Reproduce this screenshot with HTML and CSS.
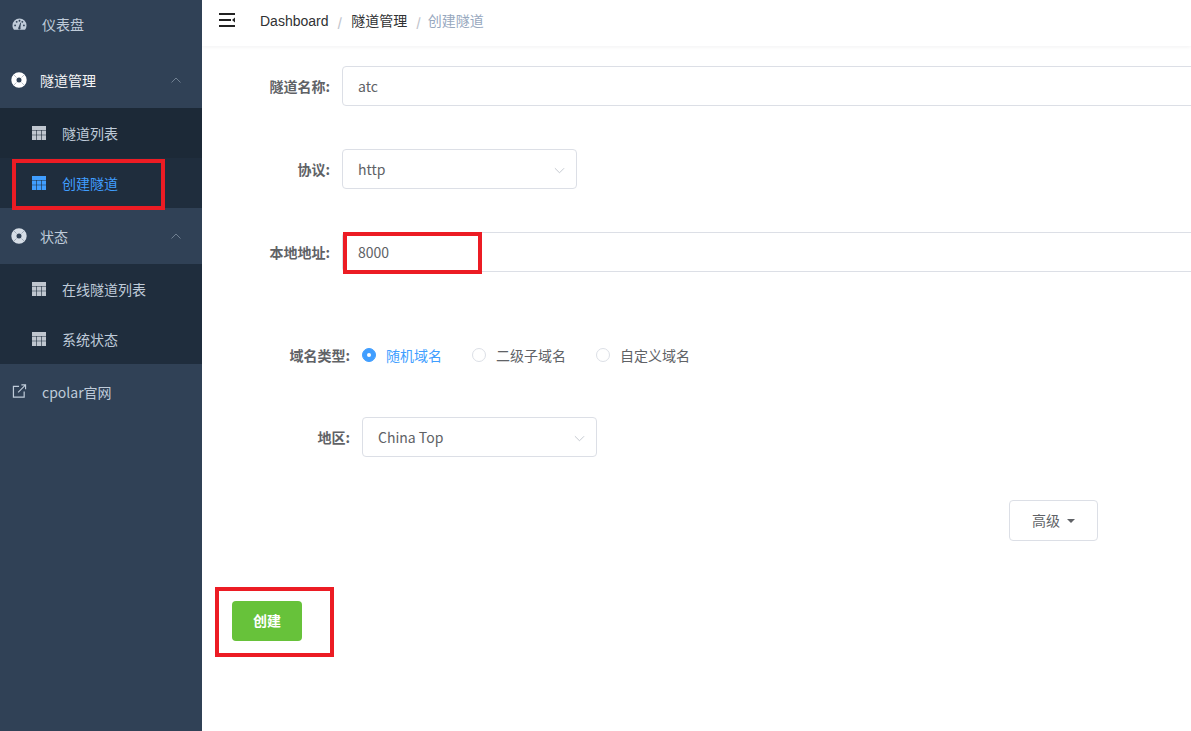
FILE: index.html
```html
<!DOCTYPE html>
<html lang="zh-CN">
<head>
<meta charset="utf-8">
<title>创建隧道</title>
<link rel="stylesheet" href="styles.css">
</head>
<body>
<div class="app">
  <aside class="sidebar">
    <nav class="menu">
      <a class="item"><svg class="ico" viewBox="0 0 16 14"><path d="M8 1a7.500 7.500 0 0 0-7.500 7.500c0 1.700.6 3.300 1.600 4.500h11.800a7.400 7.400 0 0 0 1.600-4.500A7.500 7.500 0 0 0 8 1z" fill="#bfcbd9"/><g fill="#304156"><circle cx="3.300" cy="8.500" r="1"/><circle cx="5" cy="4.700" r="1"/><circle cx="11" cy="4.700" r="1"/><circle cx="12.700" cy="8.500" r="1"/><circle cx="8" cy="3.500" r="1"/><path d="M7 10.500 9 5.500l.6.200L9 10.800a1.300 1.300 0 1 1-2-.3z"/></g></svg><span class="dash-label">仪表盘</span></a>
      <a class="item open"><svg class="ring" viewBox="0 0 16 16"><circle cx="8" cy="8" r="5.100" fill="none" stroke="#fff" stroke-width="5.200"/><path d="M2.500 2.500l3 3M13.500 2.500l-3 3M2.500 13.500l3-3M13.500 13.500l-3-3" stroke="#8c97a5" stroke-width=".6"/></svg><span class="group-label">隧道管理</span><svg class="chev" viewBox="0 0 10 6"><path d="M.5 5.500 5 1l4.500 4.500" fill="none" stroke="#6f7f91" stroke-width="1"/></svg></a>
      <div class="sub">
        <a class="sub-item first"><svg class="grid" viewBox="0 0 14 14"><use href="#tb"/></svg><span>隧道列表</span></a>
        <a class="sub-item active"><svg class="grid" viewBox="0 0 14 14"><use href="#tb"/></svg><span>创建隧道</span></a>
      </div>
      <a class="item"><svg class="ring" viewBox="0 0 16 16"><circle cx="8" cy="8" r="5.100" fill="none" stroke="#d5dde6" stroke-width="5.200"/><path d="M2.500 2.500l3 3M13.500 2.500l-3 3M2.500 13.500l3-3M13.500 13.500l-3-3" stroke="#7d8a99" stroke-width=".6"/></svg><span class="group-label">状态</span><svg class="chev" viewBox="0 0 10 6"><path d="M.5 5.500 5 1l4.500 4.500" fill="none" stroke="#6f7f91" stroke-width="1"/></svg></a>
      <div class="sub">
        <a class="sub-item"><svg class="grid" viewBox="0 0 14 14"><use href="#tb"/></svg><span>在线隧道列表</span></a>
        <a class="sub-item"><svg class="grid" viewBox="0 0 14 14"><use href="#tb"/></svg><span>系统状态</span></a>
      </div>
      <a class="item"><svg class="ico ext" viewBox="0 0 15 15"><path d="M7 2.500H1v11.500h11.500V8" fill="none" stroke="#bfcbd9" stroke-width="1.300"/><path d="M6 9l7.500-7.500M9.500 1h4.500v4.500" fill="none" stroke="#bfcbd9" stroke-width="1.200"/></svg><span class="dash-label">cpolar官网</span></a>
    </nav>
  </aside>
  <main class="main">
    <header class="navbar">
      <svg class="hamburger" viewBox="0 0 16 14"><path d="M0 0h16v2H0zM0 12h16v2H0zM0 6h12v2H0z" fill="#222"/><path d="M16 4.500v5L13 7z" fill="#222"/></svg>
      <ol class="crumbs">
        <li class="home">Dashboard</li><li class="sep">/</li><li class="link">隧道管理</li><li class="sep">/</li><li class="current">创建隧道</li>
      </ol>
    </header>
    <form class="form">
      <div class="row row-name">
        <label class="label">隧道名称:</label>
        <div class="input wide">atc</div>
      </div>
      <div class="row row-proto">
        <label class="label">协议:</label>
        <div class="input select">http<svg class="caret" viewBox="0 0 12 7"><path d="M1 1l5 5 5-5" fill="none" stroke="#c0c4cc" stroke-width="1"/></svg></div>
      </div>
      <div class="row row-addr">
        <label class="label">本地地址:</label>
        <div class="input wide">8000</div>
      </div>
      <div class="row row-radio">
        <label class="label inner">域名类型:</label>
        <div class="radios">
          <span class="radio checked"><i></i>随机域名</span>
          <span class="radio"><i></i>二级子域名</span>
          <span class="radio"><i></i>自定义域名</span>
        </div>
      </div>
      <div class="row row-region">
        <label class="label inner">地区:</label>
        <div class="input select">China Top<svg class="caret" viewBox="0 0 12 7"><path d="M1 1l5 5 5-5" fill="none" stroke="#c0c4cc" stroke-width="1"/></svg></div>
      </div>
      <div class="row-adv">
        <button type="button" class="btn-adv">高级<span class="tri"></span></button>
      </div>
      <button type="button" class="btn-create">创建</button>
    </form>
  </main>
</div>
<div class="mark mark-side"></div>
<div class="mark mark-addr"></div>
<div class="mark mark-create"></div>
<svg class="defs" width="0" height="0"><defs><g id="tb" fill="currentColor"><path d="M0 0h14v4H0zM0 4.600h4.300v4.100H0zM4.900 4.600h4.200v4.100H4.900zM9.700 4.600H14v4.100H9.700zM0 9.300h4.300V14H0zM4.900 9.300h4.200V14H4.900zM9.700 9.300H14V14H9.700z"/></g></defs></svg>
</body>
</html>
```
FILE: styles.css
```css
* { box-sizing: border-box; }
html, body { margin: 0; height: 100%; overflow: hidden; background: #fff; }
body { font-family: "Noto Sans CJK SC", "Noto Sans", sans-serif; font-size: 14px; color: #606266; }
.app { display: flex; height: 731px; }
.defs { position: absolute; }

.sidebar { width: 202px; flex: none; background: #304156; overflow: hidden; }
.menu { margin-top: -4px; display: flex; flex-direction: column; }
.item { display: flex; align-items: center; height: 56px; padding-left: 12px; color: #bfcbd9; position: relative; }
.item.open .group-label { color: #f4f4f5; }
.ico { width: 15px; height: 14px; flex: none; }
.ext { margin-top: -2px; }
.dash-label { margin-left: 15px; }
.ring { width: 16px; height: 16px; flex: none; margin-left: -1px; }
.group-label { margin-left: 13px; }
.chev { width: 10px; height: 6px; position: absolute; left: 171px; top: 25px; }
.sub { background: #1f2d3d; display: flex; flex-direction: column; }
.sub-item { display: flex; align-items: center; height: 50px; padding-left: 32px; color: #bfcbd9; }
.sub-item.first { background: #1c2937; }
.sub-item.active { color: #409eff; }
.grid { width: 14px; height: 14px; flex: none; margin-right: 16px; color: #bfc6cf; }
.active .grid { color: #409eff; }

.main { flex: 1; min-width: 0; overflow: hidden; }
.navbar { height: 46px; display: flex; align-items: center; padding: 0 0 4px 17px; box-shadow: 0 1px 4px rgba(0, 21, 41, .06); }
.hamburger { width: 16px; height: 14px; flex: none; margin-top: -2px; }
.crumbs { display: flex; align-items: center; list-style: none; margin: 0 0 0 25px; padding: 0; color: #303133; }
.home { font-family: "Liberation Sans", sans-serif; }
.link, .current { margin-top: -2px; }
.sep { color: #c0c4cc; margin: 0 9px; font-weight: 700; font-size: 12px; }
.current { color: #97a8be; margin-left: -2px; }

.form { padding-top: 20px; }
.row { display: flex; align-items: center; height: 40px; }
.row-proto, .row-addr { margin-top: 43px; }
.row-radio { margin-top: 63px; }
.row-region { margin-top: 42px; }
.label { width: 140px; flex: none; text-align: right; padding-right: 12px; font-weight: 700; }
.label.inner { width: 160px; }
.input { height: 40px; border: 1px solid #dcdfe6; border-radius: 4px; padding: 0 15px; display: flex; align-items: center; background: #fff; position: relative; }
.wide { width: 1000px; flex: none; }
.select { width: 235px; flex: none; }
.caret { position: absolute; right: 11px; top: 17px; width: 11px; height: 7px; }
.radios { display: flex; }
.radio { display: inline-flex; align-items: center; margin-right: 30px; }
.radio i { width: 14px; height: 14px; border: 1px solid #dcdfe6; border-radius: 50%; margin-right: 10px; background: #fff; position: relative; }
.radio.checked { color: #409eff; }
.radio.checked i { background: #409eff; border-color: #409eff; }
.radio.checked i::after { content: ""; position: absolute; left: 4px; top: 4px; width: 4px; height: 4px; border-radius: 50%; background: #fff; }
.row-adv { display: flex; justify-content: flex-end; margin-top: 43px; padding-right: 93px; }
.btn-adv { width: 89px; height: 41px; border: 1px solid #dcdfe6; border-radius: 4px; background: #fff; color: #606266; font: inherit; padding: 0 0 2px; display: flex; align-items: center; justify-content: center; }
.tri { width: 0; height: 0; border: 4.500px solid transparent; border-top-color: #606266; border-bottom: 0; margin: 2px 0 0 7px; }
.btn-create { display: block; margin: 60px 0 0 30px; width: 70px; height: 40px; border: 0; border-radius: 4px; background: #67c23a; color: #fff; font: inherit; font-weight: 700; padding: 0 0 2px; }

.mark { position: absolute; border: 4px solid #ec1c24; }
.mark-side { left: 12px; top: 159px; width: 153px; height: 51px; }
.mark-addr { left: 343px; top: 232px; width: 139px; height: 42px; }
.mark-create { left: 215px; top: 587px; width: 119px; height: 70px; }
```
